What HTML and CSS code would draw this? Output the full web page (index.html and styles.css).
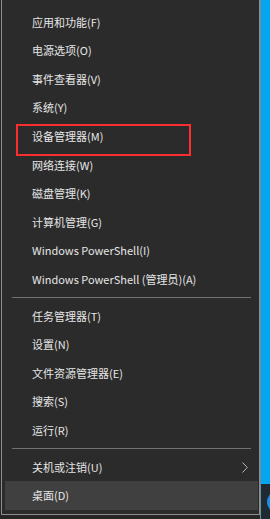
FILE: index.html
```html
<!DOCTYPE html>
<html lang="zh-CN">
<head>
	<meta charset="UTF-8">
	<title>开始菜单</title>
	<link rel="stylesheet" href="styles.css">
</head>
<body>

	<div id="screen">
		<div id="menu">
			<ul class="group">
				<li>应用和功能(F)</li>
				<li>电源选项(O)</li>
				<li>事件查看器(V)</li>
				<li>系统(Y)</li>
				<li>设备管理器(M)</li>
				<li>网络连接(W)</li>
				<li>磁盘管理(K)</li>
				<li>计算机管理(G)</li>
				<li>Windows PowerShell(I)</li>
				<li>Windows PowerShell (管理员)(A)</li>
			</ul>
			<div class="sep"></div>
			<ul class="group">
				<li>任务管理器(T)</li>
				<li>设置(N)</li>
				<li>文件资源管理器(E)</li>
				<li>搜索(S)</li>
				<li>运行(R)</li>
			</ul>
			<div class="sep"></div>
			<ul class="group">
				<li class="sub">关机或注销(U)
					<svg class="arrow" width="6" height="11" viewBox="0 0 6 11"><path d="M0.5 0.5 L5.3 5.5 L0.5 10.5" fill="none" stroke="#b8b8b8" stroke-width="1"/></svg>
				</li>
				<li class="hover">桌面(D)</li>
			</ul>
			<span id="mark"></span>
		</div>
		<div id="desk">
			<div class="bar"><span class="dot"></span></div>
		</div>
	</div>

</body>
</html>
```

FILE: styles.css
```css
*{
	margin: 0;
	padding: 0;
}
ul{
	list-style-type: none;
}
body{
	background: #262626;
	font-family: "Noto Sans CJK SC", "Noto Sans", sans-serif;
}
#screen{
	width: 270px;
	height: 519px;
	display: flex;
	overflow: hidden;
}
#menu{
	width: 257px;
	height: 506.2px;
	margin-left: 1px;
	padding-top: 7.7px;
	background: #2b2b2b;
	border: 1px solid #8e8e8e;
	border-top: none;
	position: relative;
}
.group li{
	height: 28.6px;
	line-height: 28.6px;
	margin: 0 1px 0 3px;
	padding-left: 27px;
	font-size: 11px;
	color: #e6e6e6;
	white-space: nowrap;
	position: relative;
}
.group .hover{
	background: #404040;
}
.arrow{
	position: absolute;
	right: 10px;
	top: 9px;
}
.sep{
	height: 1px;
	margin: 3.5px 8px 3.5px 10px;
	background: #707070;
}
/* red highlight round 设备管理器 */
#mark{
	position: absolute;
	left: 14px;
	top: 124px;
	width: 171px;
	height: 28px;
	border: 2px solid #ff2e2e;
}
#desk{
	flex: 1;
	display: flex;
	flex-direction: column;
	justify-content: flex-end;
	background: #06a6ee;
	border-left: 1px solid #6f8d9c;
}
#desk .bar{
	height: 35px;
	background: #1f2a33;
	position: relative;
}
#desk .dot{
	position: absolute;
	left: 6px;
	top: 9px;
	width: 14px;
	height: 18px;
	border-radius: 50%;
	background: #1a8fe0;
}
```
